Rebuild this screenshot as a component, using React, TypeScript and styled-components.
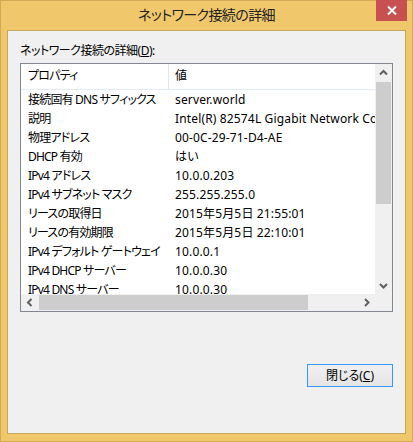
import React from "react";
import styled, { createGlobalStyle } from "styled-components";

const Global = createGlobalStyle`
  html, body { margin: 0; padding: 0; background: #f0c86b; }
  * { box-sizing: border-box; }
`;

const FONT = `"Noto Sans", "Noto Sans CJK JP", sans-serif`;

const Window = styled.div`
  width: 413px;
  height: 442px;
  border: 1px solid #d2aa55;
  background: #f0c86b;
  display: flex;
  flex-direction: column;
  font-family: ${FONT};
  font-feature-settings: "palt";
  color: #000;
`;

const TitleBar = styled.div`
  height: 29px;
  display: grid;
  grid-template-columns: 1fr auto 1fr;
  align-items: start;
`;

const Title = styled.div`
  font-size: 14px;
  letter-spacing: -0.6px;
  line-height: 28px;
  color: #222;
  white-space: nowrap;
`;

const CloseButton = styled.div`
  justify-self: end;
  margin-right: 5px;
  margin-top: -1px;
  width: 31px;
  height: 21px;
  background: #c75050;
  display: flex;
  align-items: center;
  justify-content: center;
`;

const Client = styled.div`
  flex: 1;
  margin: 0 6px 7px 6px;
  border: 1px solid #c5a55a;
  background: #f0f0f0;
  display: flex;
  flex-direction: column;
  padding: 12px 12px 0 12px;
`;

const GroupLabel = styled.div`
  font-size: 12px;
  letter-spacing: -0.5px;
  line-height: 16px;
  height: 16px;
  margin-bottom: 4px;
  white-space: nowrap;
`;

const ListBox = styled.div`
  width: 373px;
  height: 249px;
  border: 1px solid #828790;
  background: #fff;
  display: grid;
  grid-template-columns: 354px 17px;
  grid-template-rows: 230px 17px;
`;

const Viewport = styled.div`
  overflow: hidden;
  background: #fff;
`;

const HeaderRow = styled.div`
  display: flex;
  height: 26px;
  border-bottom: 1px solid #e3ecf7;
`;

const Row = styled.div`
  display: flex;
  height: 19px;
`;

const Cell = styled.div<{ $first?: boolean }>`
  flex: none;
  width: ${(p) => (p.$first ? "148px" : "400px")};
  padding-left: ${(p) => (p.$first ? "7px" : "6px")};
  letter-spacing: ${(p) => (p.$first ? "-0.8px" : "0.15px")};
  font-size: 12px;
  line-height: 19px;
  white-space: nowrap;
  overflow: hidden;
`;

const HeaderCell = styled(Cell)`
  line-height: 24px;
  border-right: ${(p) => (p.$first ? "1px solid #e5e5e5" : "none")};
`;

const VScroll = styled.div`
  background: #f0f0f0;
  display: flex;
  flex-direction: column;
`;

const HScroll = styled.div`
  background: #f0f0f0;
  display: flex;
`;

const Corner = styled.div`
  background: #f0f0f0;
`;

const ArrowButton = styled.div`
  flex: none;
  width: 17px;
  height: 17px;
  display: flex;
  align-items: center;
  justify-content: center;
`;

const VThumb = styled.div`
  margin: 1px 1px 0 1px;
  height: 122px;
  background: #cdcdcd;
`;

const HThumb = styled.div`
  margin: 1px 0 1px 1px;
  width: 269px;
  background: #cdcdcd;
`;

const Spacer = styled.div`
  flex: 1;
`;

const Footer = styled.div`
  display: flex;
  justify-content: flex-end;
  margin-top: 52px;
`;

const Button = styled.div`
  width: 86px;
  height: 23px;
  border: 1px solid #3399ff;
  background: linear-gradient(#f0f0f0, #e5e5e5);
  font-size: 12px;
  line-height: 21px;
  text-align: center;
`;

const Chevron = ({ dir }: { dir: "up" | "down" | "left" | "right" }) => {
  const pts: Record<string, string> = {
    up: "1,5.5 4.5,2 8,5.5",
    down: "1,2 4.5,5.5 8,2",
    left: "5.5,1 2,4.5 5.5,8",
    right: "2,1 5.5,4.5 2,8",
  };
  const vertical = dir === "up" || dir === "down";
  return (
    <svg width={vertical ? 9 : 8} height={vertical ? 8 : 9} viewBox={vertical ? "0 0 9 8" : "0 0 8 9"}>
      <polyline points={pts[dir]} fill="none" stroke="#606060" strokeWidth="2" />
    </svg>
  );
};

const rows: [string, string][] = [
  ["接続固有 DNS サフィックス", "server.world"],
  ["説明", "Intel(R) 82574L Gigabit Network Connection"],
  ["物理アドレス", "00-0C-29-71-D4-AE"],
  ["DHCP 有効", "はい"],
  ["IPv4 アドレス", "10.0.0.203"],
  ["IPv4 サブネット マスク", "255.255.255.0"],
  ["リースの取得日", "2015年5月5日 21:55:01"],
  ["リースの有効期限", "2015年5月5日 22:10:01"],
  ["IPv4 デフォルト ゲートウェイ", "10.0.0.1"],
  ["IPv4 DHCP サーバー", "10.0.0.30"],
  ["IPv4 DNS サーバー", "10.0.0.30"],
];

export default function App() {
  return (
    <>
      <Global />
      <Window>
        <TitleBar>
          <span />
          <Title>ネットワーク接続の詳細</Title>
          <CloseButton>
            <svg width="10" height="9" viewBox="0 0 10 9">
              <path d="M1 0.5 L9 8.5 M9 0.5 L1 8.5" stroke="#fff" strokeWidth="2" />
            </svg>
          </CloseButton>
        </TitleBar>
        <Client>
          <GroupLabel>
            ネットワーク接続の詳細(<u>D</u>):
          </GroupLabel>
          <ListBox>
            <Viewport>
              <HeaderRow>
                <HeaderCell $first>プロパティ</HeaderCell>
                <HeaderCell>値</HeaderCell>
              </HeaderRow>
              {rows.map(([k, v]) => (
                <Row key={k}>
                  <Cell $first>{k}</Cell>
                  <Cell>{v}</Cell>
                </Row>
              ))}
            </Viewport>
            <VScroll>
              <ArrowButton>
                <Chevron dir="up" />
              </ArrowButton>
              <VThumb />
              <Spacer />
              <ArrowButton>
                <Chevron dir="down" />
              </ArrowButton>
            </VScroll>
            <HScroll>
              <ArrowButton>
                <Chevron dir="left" />
              </ArrowButton>
              <HThumb />
              <Spacer />
              <ArrowButton>
                <Chevron dir="right" />
              </ArrowButton>
            </HScroll>
            <Corner />
          </ListBox>
          <Footer>
            <Button>
              閉じる(<u>C</u>)
            </Button>
          </Footer>
        </Client>
      </Window>
    </>
  );
}
